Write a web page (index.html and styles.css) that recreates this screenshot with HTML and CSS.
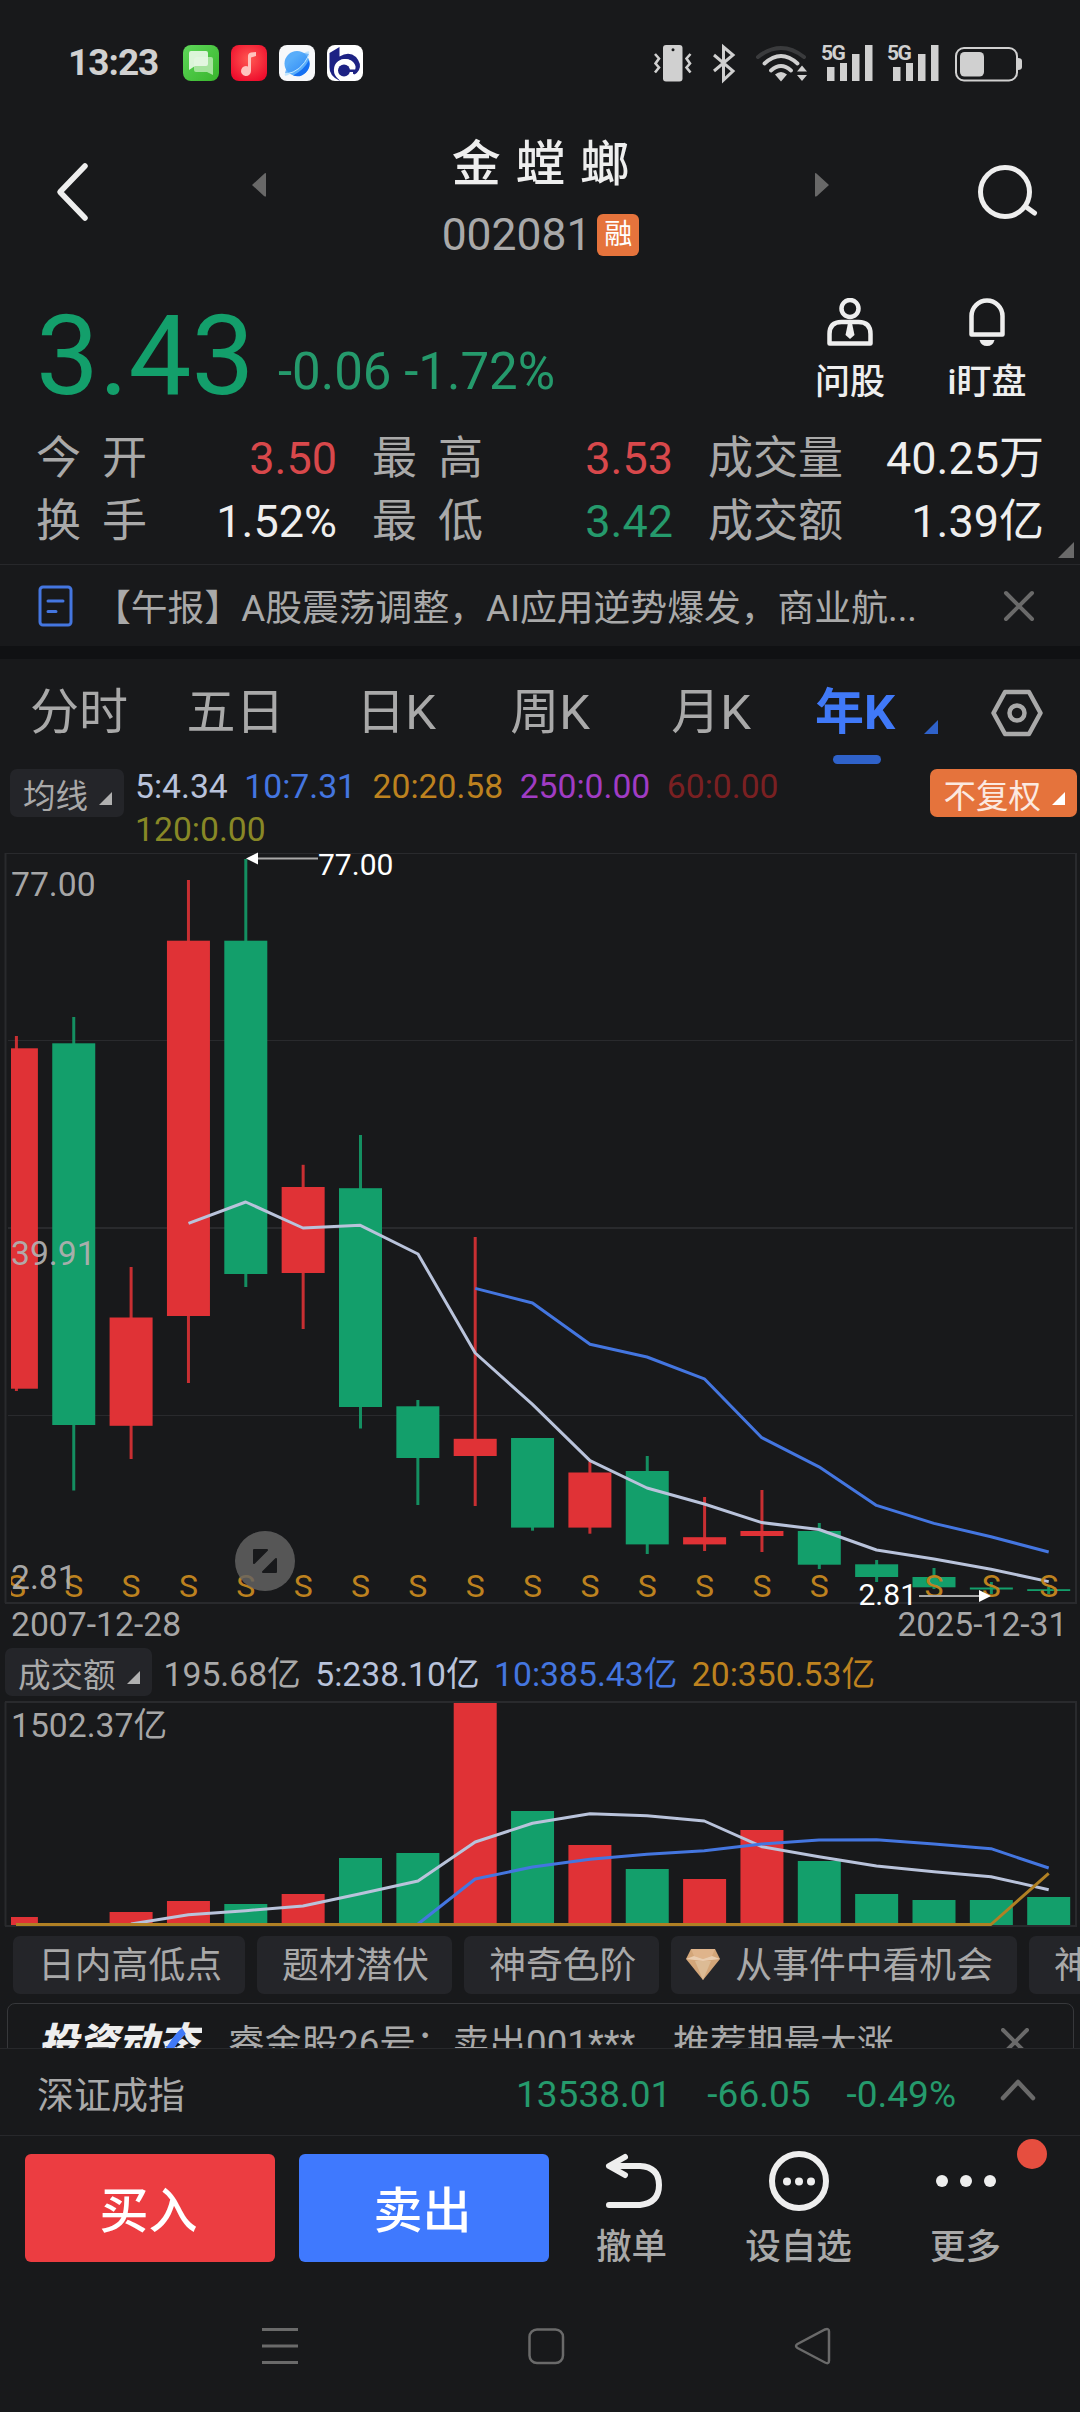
FILE: index.html
```html
<!DOCTYPE html>
<html lang="zh-CN">
<head>
    <meta charset="UTF-8">
    <title>金螳螂 002081</title>
    <link rel="stylesheet" href="styles.css">
</head>
<body>

<div class="status-bar">
    <span class="clock">13:23</span>
    <div class="app-icons">
        <svg width="36" height="36" viewBox="0 0 36 36">
            <defs>
                <linearGradient id="gGreen" x1="0" y1="0" x2="1" y2="1"><stop offset="0" stop-color="#5fd75a"/><stop offset="1" stop-color="#37b52b"/></linearGradient>
            </defs>
            <rect width="36" height="36" rx="8" fill="url(#gGreen)"/>
            <path d="M13 12h15a2 2 0 0 1 2 2v16l-6-3H13a2 2 0 0 1-2-2V14z" fill="#a5e39d"/>
            <path d="M8 6h15a2 2 0 0 1 2 2v11a2 2 0 0 1-2 2H12l-6 4V8a2 2 0 0 1 2-2z" fill="#e6f8e4" fill-opacity=".93"/>
        </svg>
        <svg width="36" height="36" viewBox="0 0 36 36">
            <defs>
                <radialGradient id="gRed" cx=".5" cy=".4" r=".65"><stop offset="0" stop-color="#ff5a52"/><stop offset="1" stop-color="#ee0c2c"/></radialGradient>
            </defs>
            <rect width="36" height="36" rx="8" fill="url(#gRed)"/>
            <path d="M25 7v4l-5 1.500V26a5 5 0 1 1-3-4.500V11q0-3 3-3.500z" fill="#ffc3be"/>
        </svg>
        <svg width="36" height="36" viewBox="0 0 36 36">
            <defs>
                <linearGradient id="gBlue" x1="0" y1="0" x2="1" y2="1"><stop offset="0" stop-color="#6fc5fb"/><stop offset="1" stop-color="#1672f4"/></linearGradient>
            </defs>
            <rect width="36" height="36" rx="8" fill="#f7f8fa"/>
            <ellipse cx="18" cy="18.500" rx="17" ry="3.500" transform="rotate(-45 18 18.500)" fill="#c4e6fd"/>
            <circle cx="18" cy="18.500" r="12.500" fill="#59adfa"/>
            <path d="M30 15A12.500 12.500 0 0 1 14 30.500Q25 25 30 15z" fill="#1670f2"/>
            <path d="M6 28Q21 28 30 9L25 8Q10 10 6 28z" fill="url(#gBlue)" opacity=".65"/>
            <path d="M7 29Q22 27 30 10" fill="none" stroke="#bfe6ff" stroke-width="1"/>
        </svg>
        <svg width="36" height="36" viewBox="0 0 36 36">
            <rect width="36" height="36" rx="8" fill="#fff"/>
            <path d="M12.500 2v9.500Q22 6 29 12q6 7 3 13-2 4-6 5.500V27q3-2 2.500-6Q26 14 18 14q-8 .5-9.500 9Q8 30 13 36 2 31 2.500 22V8z" fill="#1d2284"/>
            <path d="M26.500 21A9.500 9.500 0 1 0 26.500 29" fill="none" stroke="#fff" stroke-width="3"/>
            <circle cx="17" cy="25.500" r="6" fill="#1d2284"/>
            <rect x="17" y="24.500" width="11" height="2.500" fill="#1d2284"/>
        </svg>
    </div>
    <svg class="sys-icons" width="370" height="50" viewBox="653 37 370 50">
        <g fill="#d0d0d0">
            <rect x="663" y="44" width="19.500" height="36.500" rx="3"/>
            <circle cx="673" cy="48.700" r="1.500" fill="#18191b"/>
            <path d="M655 53l4 4.500-3.500 5 3.500 4-4 5M690.500 53l-4 4.500 3.500 5-3.500 4 4 5" fill="none" stroke="#d0d0d0" stroke-width="2.600"/>
            <path d="M714 54l19 16-9.500 9V46l9.500 8-19 16" fill="none" stroke="#d0d0d0" stroke-width="3"/>
            <path d="M758 56Q781 38 804 56" fill="none" stroke="#3a3b3d" stroke-width="4" stroke-linecap="round"/>
            <path d="M764.500 62.500Q781 47.500 797.500 62.500M771 69.500Q781 60.500 791 69.500" fill="none" stroke="#d0d0d0" stroke-width="3.800" stroke-linecap="round"/>
            <path d="M775 73.500q6-5 12 0l-6 7zM797 70.500h10l-5-6zM797 74h10l-5 6z"/>
            <text x="821" y="59" class="net">5G</text>
            <rect x="827" y="66" width="7.500" height="14"/>
            <rect x="840" y="62" width="7" height="18"/>
            <rect x="852" y="53" width="7.500" height="27"/>
            <rect x="865" y="44" width="7.500" height="36"/>
            <text x="887" y="59" class="net">5G</text>
            <rect x="893" y="66" width="7.500" height="14"/>
            <rect x="906" y="62" width="7" height="18"/>
            <rect x="918" y="53" width="7.500" height="27"/>
            <rect x="931" y="44" width="7.500" height="36"/>
            <rect x="956" y="47" width="61" height="32.500" rx="8" fill="none" stroke="#d0d0d0" stroke-width="2"/>
            <rect x="960" y="51" width="24" height="24.500" rx="4.500"/>
            <path d="M1018 57q4 0 4 3v6q0 3-4 3z"/>
        </g>
    </svg>
</div>

<div class="header">
    <svg class="back" width="34" height="60" viewBox="0 0 34 60"><path d="M29 4L4 30l25 26" fill="none" stroke="#eee" stroke-width="5.500" stroke-linecap="round" stroke-linejoin="round"/></svg>
    <svg class="switch" width="14" height="24" viewBox="0 0 14 24"><path d="M14 1v22q0 1-2 0L0 12 12 1q2-2 2 0z" fill="#686868"/></svg>
    <div class="title">
        <div class="name">金 螳 螂</div>
        <div class="code">002081<span class="badge">融</span></div>
    </div>
    <svg class="switch" width="14" height="24" viewBox="0 0 14 24"><path d="M0 1v22q0 1 2 0l12-11L2 1Q0-1 0 1z" fill="#686868"/></svg>
    <svg class="search" width="62" height="58" viewBox="0 0 62 58"><circle cx="28" cy="29" r="24.500" fill="none" stroke="#eee" stroke-width="5"/><path d="M48.500 43.500l9 6.500" stroke="#eee" stroke-width="5" stroke-linecap="round"/></svg>
</div>

<div class="quote-head">
    <span class="price">3.43</span>
    <span class="change">-0.06 -1.72%</span>
    <div class="quick">
        <svg width="48" height="48" viewBox="0 0 48 48" fill="none" stroke="#eee" stroke-width="4.500">
            <ellipse cx="24" cy="10.500" rx="8.500" ry="8.500"/>
            <path d="M3.500 43.500V36q0-12 12-12h17q12 0 12 12v9.500h-41z" stroke-linejoin="round"/>
            <path d="M22 25h4l2.500 12L24 41l-4.500-4z" fill="#eee" stroke="none"/>
        </svg>
        <span>问股</span>
    </div>
    <div class="quick">
        <svg width="48" height="48" viewBox="0 0 48 48">
            <path d="M8.500 36.500V18a15.500 15.500 0 0 1 31 0v18.500z" fill="none" stroke="#eee" stroke-width="4.500" stroke-linejoin="round"/>
            <path d="M16.500 42h15q-1.500 6-7.500 6t-7.500-6z" fill="#eee"/>
        </svg>
        <span>i盯盘</span>
    </div>
</div>

<div class="stats">
    <div class="stat"><span class="label wide">今开</span><span class="up">3.50</span></div>
    <div class="stat"><span class="label wide">最高</span><span class="up">3.53</span></div>
    <div class="stat"><span class="label">成交量</span><span>40.25万</span></div>
    <div class="stat"><span class="label wide">换手</span><span>1.52%</span></div>
    <div class="stat"><span class="label wide">最低</span><span class="down">3.42</span></div>
    <div class="stat"><span class="label">成交额</span><span>1.39亿</span></div>
    <svg class="corner" width="16" height="16" viewBox="0 0 16 16"><path d="M16 0v16H0z" fill="#6a6a6a"/></svg>
</div>

<div class="news">
    <svg width="36" height="42" viewBox="0 0 36 42" fill="none" stroke="#4476e0" stroke-width="3" stroke-linecap="round"><rect x="2" y="2" width="31" height="38" rx="3"/><path d="M10 16h15M10 26.500h8"/></svg>
    <span class="news-text">【午报】A股震荡调整，AI应用逆势爆发，商业航...</span>
    <svg width="32" height="32" viewBox="0 0 32 32" stroke="#6a6a6a" stroke-width="4" stroke-linecap="round"><path d="M3 3l26 26M29 3L3 29"/></svg>
</div>

<div class="tabs">
    <span>分时</span>
    <span>五日</span>
    <span>日K</span>
    <span>周K</span>
    <span>月K</span>
    <span class="active">年K</span>
    <svg class="tab-more" width="14" height="14" viewBox="0 0 14 14"><path d="M14 0v14H0z" fill="#2f62ca"/></svg>
    <svg width="52" height="48" viewBox="0 0 52 48" fill="none" stroke="#a9a9a9" stroke-width="4.500" stroke-linejoin="round"><path d="M14 3h24l11.500 21L38 45H14L2.500 24z"/><circle cx="26" cy="24" r="7.500"/></svg>
</div>

<div class="ma-row">
    <div class="pill">均线<svg width="13" height="13" viewBox="0 0 13 13"><path d="M13 0v13H0z" fill="#b0b0b0"/></svg></div>
    <div class="ma-list">
        <span class="c5">5:4.34</span>
        <span class="c10">10:7.31</span>
        <span class="c20">20:20.58</span>
        <span class="c250">250:0.00</span>
        <span class="c60">60:0.00</span>
        <span class="c120">120:0.00</span>
    </div>
    <div class="pill adjust">不复权<svg width="13" height="13" viewBox="0 0 13 13"><path d="M13 0v13H0z" fill="#fff"/></svg></div>
</div>

<svg id="kline" class="chart" width="1080" height="792" viewBox="0 852 1080 792">
    <g class="grid">
        <path d="M5 853.500h1072" stroke-width="1"/>
        <path d="M5.500 853v750M1076 853v750M5 1603h1072M8 1228h1065" stroke-width="2"/>
        <path d="M8 1040.500h1065M8 1415.500h1065" stroke-width="1"/>
    </g>
    <clipPath id="plot"><rect x="11" y="852" width="1064" height="760"/></clipPath>
    <g id="candles" clip-path="url(#plot)"></g>
    <polyline class="line5" points="188.500,1223.400 245.700,1202 303,1228 360.300,1225.300 418,1254 475.200,1353 532.500,1404.400 590,1460.600 647,1488 704.300,1504 761.800,1522.600 819,1529.500 876.500,1550 934,1559 991,1569.300 1048.700,1581.600"/>
    <polyline class="line10" points="475.200,1288.400 532.500,1303 590,1344.300 647,1357 704.300,1378.800 761.800,1437.700 819,1466.800 876.500,1505.400 934,1523.400 991,1536.800 1048.700,1552"/>
    <g id="marks" clip-path="url(#plot)"></g>
    <text class="axis" x="11" y="896">77.00</text>
    <text class="axis" x="11" y="1265">39.91</text>
    <text class="axis" x="11" y="1589">2.81</text>
    <text class="axis" x="11" y="1635.500">2007-12-28</text>
    <text class="axis" x="1067.500" y="1635.500" text-anchor="end">2025-12-31</text>
    <path d="M256 858.500h62M919 1596h62" stroke="#a9a9a9" stroke-width="2"/>
    <path d="M246 858.500l12-6v12zM991 1596l-12-6v12z" fill="#fff"/>
    <text class="peak" x="318" y="875">77.00</text>
    <text class="peak" x="858.500" y="1605">2.81</text>
    <circle cx="265" cy="1561" r="30" fill="#646464" fill-opacity=".82"/>
    <path d="M254 1550h13l-13 13zM276 1559v13h-13z" fill="#18191b" stroke="#18191b" stroke-width="2" stroke-linejoin="round"/>
</svg>

<div class="vol-row">
    <div class="pill">成交额<svg width="13" height="13" viewBox="0 0 13 13"><path d="M13 0v13H0z" fill="#b0b0b0"/></svg></div>
    <div class="vol-list">
        <span>195.68亿</span>
        <span class="c5">5:238.10亿</span>
        <span class="c10">10:385.43亿</span>
        <span class="c20">20:350.53亿</span>
    </div>
</div>

<svg id="volume" class="chart" width="1080" height="228" viewBox="0 1700 1080 228">
    <path class="grid" d="M5 1702h1072M5 1926h1072M5.500 1702v224M1076 1702v224" stroke-width="2"/>
    <g id="bars"></g>
    <polyline class="line5" points="131,1924 188.500,1914.700 245.700,1910.700 303,1906 360.300,1893.700 418,1881 475.200,1842 532.500,1823.300 590,1813.700 647,1815.700 704.300,1821 761.800,1846.700 819,1856.700 876.500,1866 934,1871.700 991,1876.700 1048.700,1889.700"/>
    <polyline class="line10" points="418,1924 475.200,1879 532.500,1867 590,1859.300 647,1854.300 704.300,1850.700 761.800,1844 819,1840 876.500,1839.700 934,1844 991,1848.700 1048.700,1868"/>
    <polyline class="line20" points="16,1924.500 991,1924.500 1048.700,1873.300"/>
    <text class="axis" x="11" y="1737">1502.37亿</text>
</svg>

<div class="chips">
    <span class="chip">日内高低点</span>
    <span class="chip">题材潜伏</span>
    <span class="chip">神奇色阶</span>
    <span class="chip gem">
        <svg width="34" height="31" viewBox="0 0 34 31"><path d="M5 0h24l5 10-17 21L0 10z" fill="#d3a679"/><path d="M5 0h24l-3 7-9 3-9-3z" fill="#dfb48b"/><path d="M0 10l8-3 9 3 9-3 8 3-17 2z" fill="#e9cdb0"/><path d="M9 12h16l-8 19z" fill="#dcbb95"/></svg>
        从事件中看机会
    </span>
    <span class="chip">神奇电波</span>
</div>

<div class="feed">
    <div class="feed-card">
        <svg width="164" height="60" viewBox="0 0 164 60">
            <text class="feed-logo" x="0" y="43">投资动态</text>
            <path d="M118 46c14-4 17-22 28-29" fill="none" stroke="#4079f8" stroke-width="7"/>
        </svg>
        <span class="feed-text">睿金股26号：卖出001***</span>
        <span class="feed-text">推荐期最大涨</span>
        <svg width="28" height="28" viewBox="0 0 28 28" stroke="#6a6a6a" stroke-width="4" stroke-linecap="round"><path d="M2 2l24 24M26 2L2 26"/></svg>
    </div>
</div>

<div class="index-row">
    <span class="index-name">深证成指</span>
    <span>13538.01</span>
    <span>-66.05</span>
    <span>-0.49%</span>
    <svg width="36" height="24" viewBox="0 0 36 24"><path d="M3 20L18 4l15 16" fill="none" stroke="#6a6a6a" stroke-width="4.500" stroke-linecap="round" stroke-linejoin="round"/></svg>
</div>

<div class="actions">
    <button class="trade buy">买入</button>
    <button class="trade sell">卖出</button>
    <div class="action">
        <svg width="64" height="64" viewBox="0 0 64 64" fill="none" stroke="#eee" stroke-width="6" stroke-linecap="round" stroke-linejoin="round"><path d="M9 56h31q19-2 19-20T40 17H10M25 8L9 17l16 9"/></svg>
        <span>撤单</span>
    </div>
    <div class="action">
        <svg width="64" height="64" viewBox="0 0 64 64" fill="#eee"><circle cx="32" cy="32" r="27" fill="none" stroke="#eee" stroke-width="6"/><circle cx="20" cy="32.500" r="4"/><circle cx="32" cy="32.500" r="4"/><circle cx="44" cy="32.500" r="4"/></svg>
        <span>设自选</span>
    </div>
    <div class="action">
        <svg width="64" height="64" viewBox="0 0 64 64" fill="#eee"><circle cx="8" cy="32" r="6"/><circle cx="32" cy="32" r="6"/><circle cx="56" cy="32" r="6"/></svg>
        <span>更多</span>
        <i class="dot"></i>
    </div>
</div>

<div class="nav">
    <svg width="36" height="38" viewBox="0 0 36 38" stroke="#6a6a6a" stroke-width="3"><path d="M0 2.500h36M0 19h36M0 35.500h36"/></svg>
    <svg width="38" height="38" viewBox="0 0 38 38"><rect x="2.500" y="2.500" width="33.500" height="33.500" rx="7.500" fill="none" stroke="#6a6a6a" stroke-width="2.500"/></svg>
    <svg width="38" height="38" viewBox="0 0 38 38"><path d="M3.500 17L31 2.500q4-1.500 4 2v29q0 4-4 2L3.500 21q-3-2 0-4z" fill="none" stroke="#6a6a6a" stroke-width="2.500"/></svg>
</div>

<script>
    const RED = '#e03236';
    const GREEN = '#139f6b';
    const BODY = 43;

    // direction, high, body top, body bottom, low, volume top
    const years = [
        ['r', 1036, 1048.3, 1388.7, 1391, 1917],
        ['g', 1017, 1043.3, 1425, 1490.5, 1924.5],
        ['r', 1267, 1317.5, 1425.8, 1459, 1912],
        ['r', 880, 940.7, 1316, 1383, 1901],
        ['g', 859, 940.7, 1274, 1287, 1904],
        ['r', 1164.8, 1187, 1273, 1329, 1894],
        ['g', 1135, 1188.2, 1407, 1428.5, 1858],
        ['g', 1400, 1406.3, 1458, 1505, 1853],
        ['r', 1237, 1438.8, 1456, 1506, 1703],
        ['g', 1438, 1438, 1527.6, 1530.7, 1811],
        ['r', 1461.8, 1472.5, 1527.6, 1533.7, 1845],
        ['g', 1456, 1471, 1544.4, 1554, 1869],
        ['r', 1497, 1537.2, 1544.4, 1551, 1879],
        ['r', 1490, 1531, 1536, 1552, 1830],
        ['g', 1523, 1531, 1564.7, 1569, 1861],
        ['g', 1560, 1564.3, 1577, 1582, 1894],
        ['g', 1568, 1577, 1587.3, 1589, 1900],
        ['g', 1582, 1587.5, 1589.5, 1594, 1900],
        ['g', 1587, 1589.2, 1591, 1594, 1897]
    ];

    let candles = '';
    let marks = '';
    let bars = '';

    years.forEach(([dir, high, top, bottom, low, vol], i) => {
        const x = 16.4 + i * 57.35;
        const color = dir === 'r' ? RED : GREEN;
        const left = Math.max(11, x - BODY / 2);
        const width = x + BODY / 2 - left;

        candles += `<rect x="${x - 1.5}" y="${high}" width="3" height="${low - high}" fill="${color}" opacity=".88"/>`;
        candles += `<rect x="${left}" y="${top}" width="${width}" height="${bottom - top}" fill="${color}"/>`;
        bars += `<rect x="${left}" y="${vol}" width="${width}" height="${1925 - vol}" fill="${color}"/>`;
        if (i !== 15) {
            marks += `<text class="mark" x="${x}" y="1596.5">S</text>`;
        }
    });

    document.getElementById('candles').innerHTML = candles;
    document.getElementById('marks').innerHTML = marks;
    document.getElementById('bars').innerHTML = bars;
</script>

</body>
</html>
```
FILE: styles.css
```css
* {
    box-sizing: border-box;
}

body {
    margin: 0;
    width: 1080px;
    height: 2412px;
    overflow: hidden;
    background-color: #18191b;
    color: #eee;
    font-family: Roboto, "Noto Sans CJK SC", sans-serif;
    text-spacing-trim: space-all;
}

svg {
    display: block;
    flex-shrink: 0;
}

/* status bar */
.status-bar {
    display: flex;
    align-items: center;
    height: 125px;
    padding: 0 57px 0 68px;
}

.clock {
    width: 115px;
    font-size: 37px;
    font-weight: 700;
    letter-spacing: -1px;
    color: #d0d0d0;
}

.app-icons {
    display: flex;
    gap: 12px;
}

.sys-icons {
    margin-left: auto;
}

.net {
    font-size: 21px;
    font-weight: 700;
    letter-spacing: -1.5px;
}

/* header */
.header {
    display: grid;
    grid-template-columns: 252px 14px 549px 14px 1fr;
    align-items: center;
    height: 133px;
}

.back {
    margin-left: 56px;
}

.switch {
    margin-top: -14px;
}

.title {
    margin: 5px 0 -12px;
    text-align: center;
}

.name {
    font-size: 49px;
    font-weight: 500;
    line-height: 70px;
    word-spacing: 3px;
}

.code {
    display: flex;
    justify-content: center;
    align-items: center;
    gap: 6px;
    font-size: 44.4px;
    line-height: 70px;
    color: #a9a9a9;
}

.badge {
    width: 42px;
    height: 42px;
    border-radius: 6px;
    background-color: #e5733c;
    color: #fff;
    font-size: 28px;
    line-height: 42px;
}

.search {
    margin-left: 148px;
}

/* quote */
.quote-head {
    display: flex;
    align-items: flex-start;
    height: 169px;
    padding: 34px 38px 0 36px;
}

.price {
    width: 242px;
    font-size: 112px;
    line-height: 128px;
    color: #139f6b;
}

.change {
    flex: 1;
    margin-top: 16px;
    font-size: 51px;
    line-height: 128px;
    color: #259a6c;
}

.quick {
    display: flex;
    flex-direction: column;
    align-items: center;
    gap: 15px;
    width: 110px;
    margin-left: 27px;
    padding-top: 6px;
    font-size: 35px;
    font-weight: 500;
    line-height: 44px;
}

.stats {
    position: relative;
    display: grid;
    grid-template-columns: 301px 301px 336px;
    column-gap: 35px;
    height: 137px;
    padding-left: 36px;
    align-content: start;
}

.stat {
    display: flex;
    justify-content: space-between;
    font-size: 45px;
    line-height: 63px;
}

.label {
    color: #a9a9a9;
}

.wide {
    letter-spacing: 21px;
}

.up {
    color: #d8484b;
}

.down {
    color: #259a6c;
}

.corner {
    position: absolute;
    right: 6px;
    bottom: 6px;
}

.news {
    display: flex;
    align-items: center;
    height: 95px;
    padding: 0 45px 0 38px;
    border-top: 1px solid #27282b;
    border-bottom: 13px solid #101113;
}

.news-text {
    flex: 1;
    margin: -2px 0 0 20px;
    font-size: 36.8px;
    color: #a9a9a9;
    white-space: nowrap;
}

/* tabs */
.tabs {
    display: grid;
    grid-template-columns: 158px 155px 166px 142px 180px 108px 82px 1fr;
    align-items: center;
    height: 106px;
    font-size: 49px;
    line-height: 108px;
    text-align: center;
    color: #a9a9a9;
}

.active {
    position: relative;
    font-weight: 700;
    color: #4079f8;
}

.active::after {
    content: "";
    position: absolute;
    left: 32px;
    bottom: 3px;
    width: 48px;
    height: 9px;
    border-radius: 5px;
    background-color: #2f62ca;
}

.tab-more {
    margin: 27px 0 0 15px;
}

/* indicators */
.ma-row {
    display: flex;
    height: 87px;
    padding: 0 3px 0 10px;
}

.pill {
    display: flex;
    align-items: center;
    gap: 11px;
    height: 48px;
    margin-top: 4px;
    padding: 0 12px 0 13px;
    border-radius: 7px;
    background-color: #242529;
    color: #a9a9a9;
    font-size: 32.5px;
    white-space: nowrap;
}

.pill svg {
    margin-top: 10px;
}

.adjust {
    background-color: #e5733c;
    color: #fbe9e0;
}

.ma-list {
    display: flex;
    flex: 1;
    flex-wrap: wrap;
    align-content: flex-start;
    column-gap: 16.5px;
    margin-left: 11px;
    padding-right: 100px;
    font-size: 33.7px;
    line-height: 43px;
}

.c5 {
    color: #b9c3db;
}

.c10 {
    color: #4476e0;
}

.c20 {
    color: #bd821f;
}

.c250 {
    color: #a03cc4;
}

.c60 {
    color: #7a2022;
}

.c120 {
    color: #888826;
}

/* charts */
.grid {
    fill: none;
    stroke: #292a2d;
}

.line5,
.line10,
.line20 {
    fill: none;
    stroke-width: 3;
    stroke-linejoin: round;
}

.line5 {
    stroke: #b9c3db;
}

.line10 {
    stroke: #4476e0;
}

.line20 {
    stroke: #b08024;
}

.axis {
    font-size: 33.7px;
    fill: #b0b0b0;
    fill-opacity: .95;
}

.peak {
    font-size: 30px;
    fill: #fff;
}

.mark {
    font-size: 32px;
    fill: #bd821f;
    text-anchor: middle;
}

.vol-row {
    display: flex;
    height: 56px;
    padding-left: 5px;
}

.vol-list {
    display: flex;
    gap: 14.5px;
    margin-left: 12px;
    font-size: 33.7px;
    line-height: 61px;
    color: #a9a9a9;
}

/* chips */
.chips {
    display: flex;
    gap: 12px;
    height: 75px;
    padding: 8px 0 0 13px;
    overflow: hidden;
}

.chip {
    flex-shrink: 0;
    height: 58px;
    padding: 0 23px 0 25px;
    border-radius: 7px;
    background-color: #242529;
    color: #a9a9a9;
    font-size: 36.8px;
    line-height: 60px;
    white-space: nowrap;
}

.gem {
    display: flex;
    gap: 15px;
    padding-left: 15px;
    padding-right: 24px;
}

.gem svg {
    margin-top: 13px;
}

.feed {
    height: 45px;
    padding: 0 6px 0 7px;
    overflow: hidden;
}

.feed-card {
    display: flex;
    height: 84px;
    padding: 10px 44px 0 30px;
    border: 1px solid #37383b;
    border-radius: 8px;
    font-size: 36.7px;
    line-height: 60px;
    color: #a9a9a9;
}

.feed-card > svg:last-child {
    margin: 14px 0 0 auto;
}

.feed-logo {
    font-size: 40px;
    font-weight: 900;
    font-style: italic;
    fill: #eee;
}

.feed-text {
    margin-left: 26px;
    white-space: pre;
}

.feed-text + .feed-text {
    margin-left: 38px;
}

/* index */
.index-row {
    display: flex;
    align-items: center;
    gap: 36px;
    height: 88px;
    padding: 5px 44px 0 37px;
    border-top: 1px solid #27282b;
    border-bottom: 1px solid #27282b;
    font-size: 37px;
    color: #259a6c;
}

.index-name {
    flex: 1;
    margin-top: -4px;
    color: #a9a9a9;
}

.index-row svg {
    margin-left: 8px;
    margin-top: -10px;
}

.actions {
    display: flex;
    align-items: flex-start;
    height: 164px;
    padding: 18px 0 0 25px;
}

.trade {
    width: 250px;
    height: 108px;
    margin-right: 24px;
    padding: 0 3px 3px 0;
    border: none;
    border-radius: 6px;
    color: #fff;
    font-family: inherit;
    font-size: 49px;
    font-weight: 500;
}

.buy {
    background-color: #ec3d41;
}

.sell {
    background-color: #3f79fe;
}

.action {
    position: relative;
    display: flex;
    flex-direction: column;
    align-items: center;
    gap: 12px;
    width: 167px;
    margin-top: -5px;
    font-size: 35.5px;
    font-weight: 500;
    line-height: 44px;
    color: #a9a9a9;
}

.sell + .action {
    margin-left: -25px;
}

.dot {
    position: absolute;
    left: 135px;
    top: -10px;
    width: 30px;
    height: 30px;
    border-radius: 50%;
    background-color: #e64e3f;
}

.nav {
    display: grid;
    grid-template-columns: 36px 38px 38px;
    column-gap: 229px;
    align-items: center;
    height: 92px;
    padding-left: 262px;
}
```
